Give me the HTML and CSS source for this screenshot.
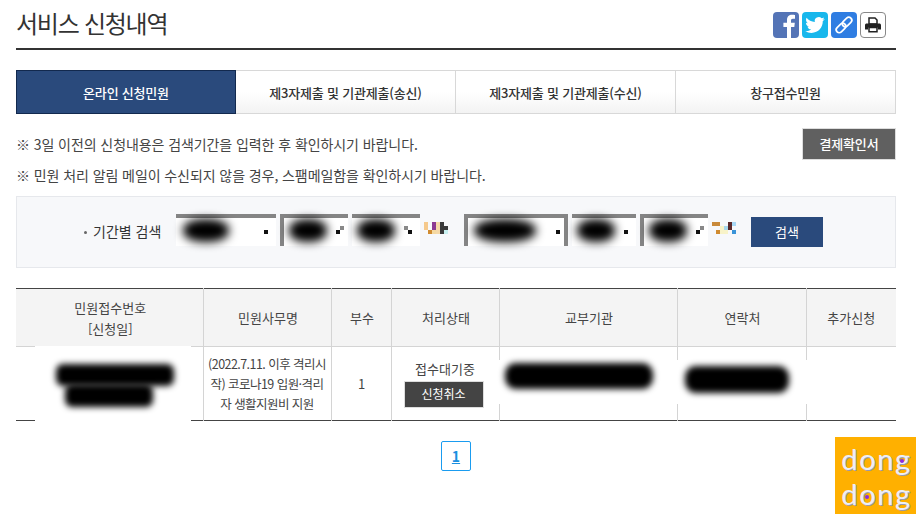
FILE: index.html
```html
<!DOCTYPE html>
<html lang="ko">
<head>
    <meta charset="UTF-8">
    <meta name="viewport" content="width=device-width, initial-scale=1.0">
    <title>서비스 신청내역</title>
    <link rel="stylesheet" href="styles.css">
</head>
<body>
    <div class="page">
        <div class="top">
            <h1 class="title">서비스 신청내역</h1>
            <div class="share">
                <a class="share-btn fb"><svg viewBox="0 0 26 26"><path d="M14 26V15h-3.6v-4.2H14V8c0-3.4 2.1-5.2 5-5.2 1.4 0 2.6.1 3 .2v3.7h-2.1c-1.6 0-1.9.8-1.9 1.9v2.2h3.8l-.5 4.2H18v11z" fill="#fff"/></svg></a>
                <a class="share-btn tw"><svg viewBox="-4 -4 32 32"><path d="M23.953 4.57a10 10 0 01-2.825.775 4.958 4.958 0 002.163-2.723c-.951.555-2.005.959-3.127 1.184a4.92 4.92 0 00-8.384 4.482C7.69 8.095 4.067 6.13 1.64 3.162a4.822 4.822 0 00-.666 2.475c0 1.71.87 3.213 2.188 4.096a4.904 4.904 0 01-2.228-.616v.06a4.923 4.923 0 003.946 4.827 4.996 4.996 0 01-2.212.085 4.936 4.936 0 004.604 3.417 9.867 9.867 0 01-6.102 2.105c-.39 0-.779-.023-1.17-.067a13.995 13.995 0 007.557 2.209c9.053 0 13.998-7.496 13.998-13.985 0-.21 0-.42-.015-.63A9.935 9.935 0 0024 4.59z" fill="#fff"/></svg></a>
                <a class="share-btn ln"><svg viewBox="0 0 26 26" fill="none" stroke="#fff" stroke-width="1.7"><rect x="4.5" y="13" width="11" height="6" rx="3" transform="rotate(-45 10 16)"/><rect x="10.5" y="7" width="11" height="6" rx="3" transform="rotate(-45 16 10)"/></svg></a>
                <a class="share-btn pr"><svg viewBox="0 0 24 24"><path d="M8 5h6l2 2v4H8z" fill="#fff" stroke="#222" stroke-width="1.5"/><path d="M4 12c0-1 .8-1.6 1.6-1.6h12.8c.8 0 1.6.6 1.6 1.6v4.6h-3v-2H7v2H4z" fill="#222"/><path d="M8 14.6h8v4.2H8z" fill="#fff" stroke="#222" stroke-width="1.5"/></svg></a>
            </div>
        </div>

        <div class="tabs">
            <a class="tab active">온라인 신청민원</a>
            <a class="tab">제3자제출 및 기관제출(송신)</a>
            <a class="tab">제3자제출 및 기관제출(수신)</a>
            <a class="tab">창구접수민원</a>
        </div>

        <div class="notes">
            <div class="note-row">
                <p class="note">※ 3일 이전의 신청내용은 검색기간을 입력한 후 확인하시기 바랍니다.</p>
                <a class="confirm-btn">결제확인서</a>
            </div>
            <p class="note note-second">※ 민원 처리 알림 메일이 수신되지 않을 경우, 스팸메일함을 확인하시기 바랍니다.</p>
        </div>

        <div class="search">
            <span class="search-label">기간별 검색</span>
            <div class="date-group">
                <div class="field w100"><i class="smudge s1"></i><i class="speck"></i></div>
                <div class="field w68 edge-left"><i class="smudge s2"></i><i class="speck grey-up"></i></div>
                <div class="field w68"><i class="smudge s2"></i><i class="speck grey-back"></i></div>
                <svg class="noise" viewBox="0 0 24 12" shape-rendering="crispEdges">
                    <rect x="0" y="0" width="4" height="8" fill="#f5c98c"/>
                    <rect x="4" y="8" width="4" height="4" fill="#d08b30"/>
                    <rect x="8" y="0" width="4" height="8" fill="#8b3a92"/>
                    <rect x="8" y="8" width="4" height="4" fill="#f5d9a0"/>
                    <rect x="12" y="0" width="4" height="12" fill="#f5d9a8"/>
                    <rect x="16" y="0" width="4" height="12" fill="#3a3a3a"/>
                    <rect x="20" y="4" width="4" height="4" fill="#3a3a3a"/>
                    <rect x="20" y="8" width="4" height="4" fill="#c8f0f0"/>
                </svg>
            </div>
            <div class="date-group second">
                <div class="field w104 edge-left edge-right"><i class="smudge s3"></i><i class="speck inner"></i></div>
                <div class="field w64"><i class="smudge s2"></i><i class="speck"></i></div>
                <div class="field w68 edge-left"><i class="smudge s2"></i><i class="speck grey-up"></i></div>
                <svg class="noise" viewBox="0 0 24 12" shape-rendering="crispEdges">
                    <rect x="0" y="0" width="8" height="4" fill="#c98a3a"/>
                    <rect x="4" y="8" width="4" height="4" fill="#d08b30"/>
                    <rect x="8" y="4" width="4" height="8" fill="#f8f3c8"/>
                    <rect x="12" y="4" width="4" height="4" fill="#a8d8ec"/>
                    <rect x="12" y="8" width="4" height="4" fill="#f8f3c8"/>
                    <rect x="16" y="0" width="4" height="8" fill="#5a2a2a"/>
                    <rect x="20" y="0" width="4" height="4" fill="#a8d8f4"/>
                    <rect x="20" y="8" width="4" height="4" fill="#3a94d8"/>
                </svg>
            </div>
            <a class="search-btn">검색</a>
        </div>

        <table class="list">
            <thead>
                <tr>
                    <th class="c1">민원접수번호<br>[신청일]</th>
                    <th class="c2">민원사무명</th>
                    <th class="c3">부수</th>
                    <th class="c4">처리상태</th>
                    <th class="c5">교부기관</th>
                    <th class="c6">연락처</th>
                    <th class="c7">추가신청</th>
                </tr>
            </thead>
            <tbody>
                <tr>
                    <td class="masked">
                        <div class="patch-a"><i class="smudge r1"></i><i class="smudge r2"></i></div>
                    </td>
                    <td class="name">(2022.7.11. 이후 격리시작) 코로나19 입원·격리자 생활지원비 지원</td>
                    <td class="count">1</td>
                    <td>
                        접수대기중
                        <a class="cancel-btn">신청취소</a>
                    </td>
                    <td class="masked">
                        <div class="patch-b"><i class="smudge r3"></i><i class="smudge r4"></i></div>
                    </td>
                    <td></td>
                    <td></td>
                </tr>
            </tbody>
        </table>

        <div class="paging"><a class="page-num">1</a></div>
    </div>

    <div class="badge">
        <span>dong</span>
        <span>dong</span>
        <i class="dot dot-a"></i>
        <i class="dot dot-b"></i>
    </div>
</body>
</html>
```

FILE: styles.css
```css
* {
    box-sizing: border-box;
}

body {
    margin: 0;
    background: #fff;
    color: #333;
    font-family: "Noto Sans CJK KR", "Noto Sans", sans-serif;
    font-size: 13px;
    overflow: hidden;
}

.page {
    width: 880px;
    margin-left: 16px;
}

/* title */
.top {
    height: 50px;
    border-bottom: 2px solid #333;
    display: flex;
    justify-content: space-between;
    padding-right: 10px;
}

.title {
    margin: 0;
    font-size: 24px;
    font-weight: 400;
    line-height: 46px;
    letter-spacing: -1.25px;
    color: #333;
}

.share {
    display: flex;
    gap: 3px;
    padding-top: 12px;
}

.share-btn {
    width: 26px;
    height: 26px;
    border-radius: 4px;
    overflow: hidden;
    display: block;
}

.share-btn svg {
    display: block;
    width: 100%;
    height: 100%;
}

.fb { background: #5474b6; }
.tw { background: #18b7ec; }
.ln { background: #2f7de2; }

.pr {
    background: #fff;
    border: 1px solid #888;
}

/* tabs */
.tabs {
    display: flex;
    margin-top: 20px;
    height: 44px;
}

.tab {
    flex: 0 0 220px;
    display: flex;
    align-items: center;
    justify-content: center;
    border: 1px solid #d8d8d8;
    border-left: 0;
    background: linear-gradient(#fff, #fff 50%, #f3f3f3);
    font-weight: 500;
    letter-spacing: -0.2px;
    color: #333;
}

.tab.active {
    background: #2a4a7c;
    border: 1px solid #12294e;
    color: #fff;
}

/* notes */
.notes {
    margin-top: 14px;
}

.note-row {
    display: flex;
    justify-content: space-between;
    height: 32px;
}

.note {
    margin: 0;
    font-size: 14px;
    line-height: 32px;
    letter-spacing: -0.08px;
    color: #444;
}

.note-second {
    margin-top: -1px;
    height: 37px;
}

.confirm-btn {
    width: 94px;
    height: 32px;
    background: #606060;
    border: 1px solid #ddd;
    color: #fff;
    text-align: center;
    line-height: 30px;
    font-weight: 500;
    letter-spacing: -0.2px;
}

/* search box */
.search {
    height: 72px;
    background: #f7f8fa;
    border: 1px solid #e6e8ec;
    display: flex;
    align-items: flex-start;
    padding-top: 17px;
    padding-left: 159px;
    position: relative;
}

.search-label {
    position: absolute;
    left: 76px;
    top: 24px;
    font-size: 14px;
    line-height: 20px;
}

.search-label::before {
    content: "";
    display: inline-block;
    width: 3px;
    height: 3px;
    border-radius: 50%;
    background: #666;
    margin: 0 6px 2px -9px;
    vertical-align: middle;
}

.date-group {
    display: flex;
    gap: 4px;
}

.date-group.second {
    margin-left: 16px;
}

.field {
    height: 32px;
    background: #fff;
    border-top: 4px solid #858585;
    position: relative;
}

.w100 { width: 100px; }
.w104 { width: 104px; }
.w68 { width: 68px; }
.w64 { width: 64px; }

.edge-left { border-left: 4px solid #858585; }
.edge-right { border-right: 4px solid #858585; }

.smudge {
    position: absolute;
    background: #000;
    border-radius: 45%;
    filter: blur(5px);
}

.field .s1 { left: 7px; top: 1px; width: 46px; height: 23px; }
.field .s2 { left: 5px; top: 1px; width: 38px; height: 23px; }
.field .s3 { left: 6px; top: 1px; width: 62px; height: 23px; }

.speck {
    position: absolute;
    right: 8px;
    top: 12px;
    width: 4px;
    height: 4px;
    background: #111;
}

.speck.inner {
    right: 4px;
}

.speck.grey-up {
    box-shadow: 4px -4px 0 #888;
}

.speck.grey-back {
    box-shadow: -4px -4px 0 #888;
}

.noise {
    width: 24px;
    height: 12px;
    margin-top: 8px;
    display: block;
}

.search-btn {
    width: 72px;
    height: 30px;
    margin-top: 3px;
    margin-left: 15px;
    background: #2a4a7c;
    color: #fff;
    text-align: center;
    line-height: 29px;
}

/* table */
.list {
    width: 880px;
    margin-top: 20px;
    border-collapse: collapse;
    table-layout: fixed;
    border-top: 1px solid #444;
    border-bottom: 1px solid #444;
}

.list th,
.list td {
    border-left: 1px solid #d4d4d4;
    border-right: 1px solid #d4d4d4;
    text-align: center;
    font-weight: 400;
    color: #444;
    padding: 0;
    position: relative;
}

.list th:first-child,
.list td:first-child {
    border-left: 0;
}

.list th:last-child,
.list td:last-child {
    border-right: 0;
}

.list th {
    height: 58px;
    padding-left: 2px;
    line-height: 21px;
    background: #f4f4f4;
    border-bottom: 1px solid #d4d4d4;
}

.list th:last-child {
    padding-left: 0;
}

.list td {
    height: 74px;
    line-height: 20px;
}

.c1 { width: 187px; }
.c2 { width: 128px; }
.c3 { width: 60px; }
.c4 { width: 108px; }
.c5 { width: 178px; }
.c6 { width: 129px; }
.c7 { width: 90px; }

.list td.name {
    padding: 0 3px;
    font-size: 12.5px;
    line-height: 20px;
    letter-spacing: -0.55px;
    word-break: break-all;
}

.list td.count {
    padding-left: 1px;
}

.cancel-btn {
    display: block;
    width: 80px;
    height: 27px;
    margin: 2px 0 0 12px;
    background: #444;
    border: 1px solid #ddd;
    color: #fff;
    font-size: 12px;
    line-height: 24px;
}

.patch-a {
    position: absolute;
    left: 19px;
    top: -1px;
    width: 156px;
    height: 76px;
    background: #fff;
}

.patch-b {
    position: absolute;
    left: -1px;
    top: 13px;
    width: 309px;
    height: 44px;
    background: #fff;
}

.r1 { left: 21px; top: 18px; width: 118px; height: 22px; border-radius: 7px; filter: blur(3px); }
.r2 { left: 30px; top: 38px; width: 88px; height: 23px; border-radius: 7px; filter: blur(3px); }
.r3 { left: 6px; top: 3px; width: 148px; height: 26px; border-radius: 11px; filter: blur(3px); }
.r4 { left: 186px; top: 6px; width: 104px; height: 27px; border-radius: 11px; filter: blur(3px); }

/* paging */
.paging {
    display: flex;
    justify-content: center;
    margin-top: 20px;
}

.page-num {
    width: 30px;
    height: 30px;
    border: 1px solid #1a9cf0;
    border-radius: 2px;
    color: #1a8fe0;
    font-weight: 700;
    font-size: 14px;
    line-height: 28px;
    text-align: center;
    text-decoration: underline;
}

/* watermark */
.badge {
    position: fixed;
    right: 0;
    bottom: 0;
    width: 81px;
    height: 77px;
    padding-left: 2px;
    background: #ffb000;
    display: flex;
    flex-direction: column;
    align-items: center;
    justify-content: center;
    color: #eceef6;
    font-family: Lato, sans-serif;
    font-size: 29px;
    line-height: 35px;
    letter-spacing: 1.6px;
    text-shadow: 1px 1px 0 #9a9aa8;
}

.dot {
    position: absolute;
    width: 4px;
    height: 4px;
    border-radius: 50%;
    background: #8a2be2;
}

.dot-a { left: 65px; top: 22px; }
.dot-b { left: 30px; top: 58px; }
```
